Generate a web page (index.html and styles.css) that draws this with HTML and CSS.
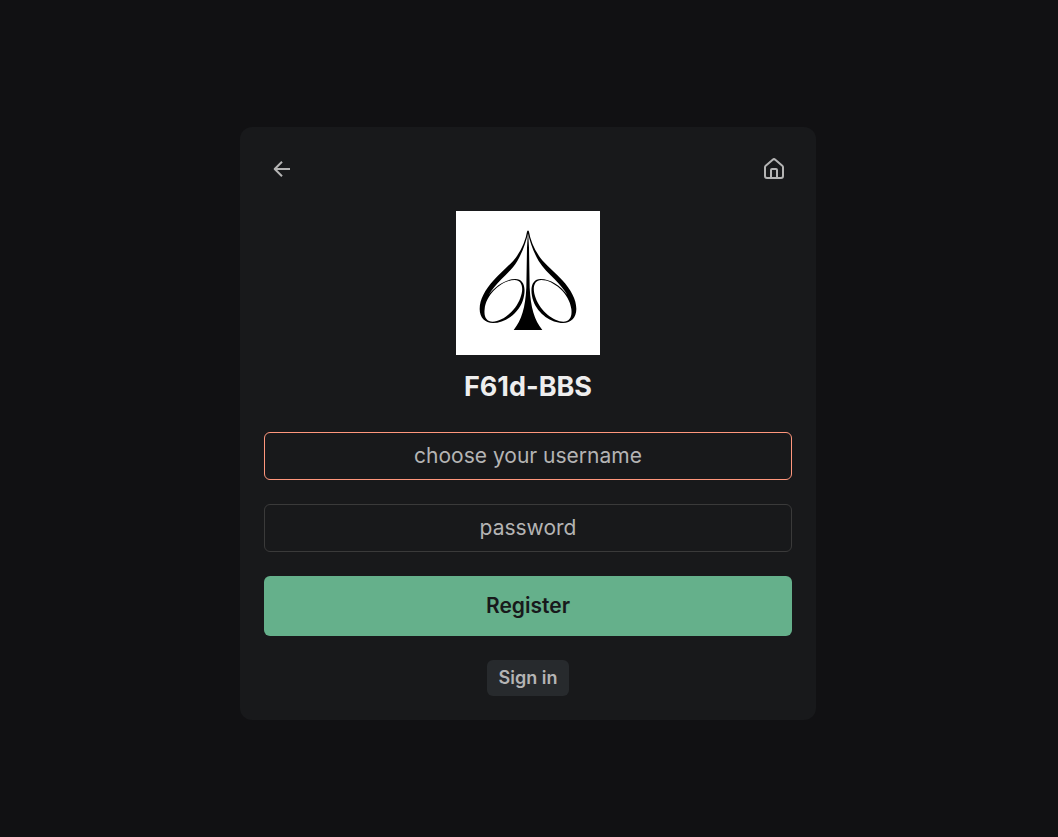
FILE: index.html
```html
<!DOCTYPE html>
<html lang="en">

<head>
    <meta charset="UTF-8">
    <meta name="viewport" content="width=device-width, initial-scale=1.0">
    <title>F61d-BBS</title>
    <link rel="stylesheet" href="styles.css">
</head>

<body>
    <main class="card">
        <nav class="card-nav">
            <a class="icon-link" href="#back" aria-label="Back">
                <svg width="24" height="24" viewBox="0 0 24 24">
                    <path class="line" d="M20 12H5M12 4.7L4.7 12l7.3 7.3" />
                </svg>
            </a>
            <a class="icon-link" href="#home" aria-label="Home">
                <svg width="24" height="24" viewBox="0 0 24 24">
                    <path class="line" d="M3 10.2a2 2 0 0 1 .7-1.5l7-6a2 2 0 0 1 2.6 0l7 6a2 2 0 0 1 .7 1.5V19a2 2 0 0 1-2 2H5a2 2 0 0 1-2-2zM9 21v-8a1 1 0 0 1 1-1h4a1 1 0 0 1 1 1v8" />
                </svg>
            </a>
        </nav>

        <svg class="logo" viewBox="0 0 432 432" role="img" aria-label="F61d-BBS logo">
            <defs>
                <g id="half">
                    <path d="M214 58C208 92 195 122 172 149C153 169 132 187 113 208C87 237 71 266 71 294C71 320 87 336 111 336C146 336 186 309 200 270C212 233 205 204 178 204C150 204 118 224 98 252C107 236 122 220 136 205C153 187 171 172 184 150C200 122 210 94 217 64ZM176 207C199 207 204 233 193 261C179 300 139 332 110 332C91 332 83 317 86 294C91 248 140 207 176 207Z" />
                </g>
            </defs>
            <use href="#half" />
            <use href="#half" transform="matrix(-1 0 0 1 432 0)" />
            <path d="M216 58L219 110L221 230C224 290 235 326 259 357H173C197 326 208 290 211 230L213 110Z" />
        </svg>
        <h1 class="title">F61d-BBS</h1>

        <form id="registerForm" class="form">
            <input class="field field-invalid" type="text" name="username" placeholder="choose your username" aria-label="Username">
            <input class="field" type="password" name="password" placeholder="password" aria-label="Password">
            <button class="register" type="submit">Register</button>
        </form>
        <a class="signin" href="#login">Sign in</a>
    </main>
</body>

</html>
```

FILE: styles.css
```css
* {
    box-sizing: border-box;
}

body {
    margin: 0;
    padding: 10px 2px 0 0;
    min-height: 100vh;
    display: flex;
    justify-content: center;
    align-items: center;
    background-color: #111113;
    color: #eeeeee;
    font-family: Inter, sans-serif;
}

.card {
    display: flex;
    flex-direction: column;
    align-items: center;
    width: 100%;
    max-width: 576px;
    padding: 24px;
    border-radius: 12px;
    background-color: #18191b;
}

.card-nav {
    display: flex;
    justify-content: space-between;
    width: 100%;
    margin-bottom: 24px;
}

.icon-link {
    display: flex;
    justify-content: center;
    align-items: center;
    width: 36px;
    height: 36px;
}

.icon-link .line {
    fill: none;
    stroke: #b4b4b4;
    stroke-width: 2;
    stroke-linejoin: round;
}

.logo {
    width: 144px;
    height: 144px;
    background-color: #fff;
    fill: #000;
}

.title {
    margin: 10px 0 24px;
    font-size: 27px;
    line-height: 43px;
    font-weight: 700;
}

.form {
    display: flex;
    flex-direction: column;
    gap: 24px;
    width: 100%;
    margin-bottom: 24px;
}

.field {
    width: 100%;
    height: 48px;
    padding: 0 12px 2px;
    border: 1px solid #3a3a3a;
    border-radius: 6px;
    outline: none;
    background-color: transparent;
    color: #eeeeee;
    font-family: inherit;
    font-size: 21px;
    text-align: center;
}

.field::placeholder {
    color: #b4b4b4;
}

.field-invalid {
    border-color: #ff977d;
}

.register {
    height: 60px;
    padding: 0 12px 2px;
    border: none;
    border-radius: 6px;
    background-color: #65b08b;
    color: #18191b;
    font-family: inherit;
    font-size: 21px;
    font-weight: 600;
    cursor: pointer;
}

.signin {
    padding: 0 12px;
    border-radius: 6px;
    background-color: #272a2d;
    color: #b4b4b4;
    font-size: 18px;
    line-height: 36px;
    font-weight: 600;
    text-decoration: none;
}
```
